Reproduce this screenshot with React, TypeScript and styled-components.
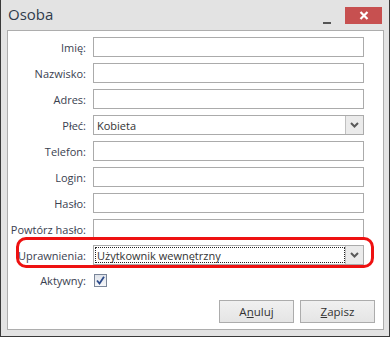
import { FC } from "react";
import styled, { createGlobalStyle } from "styled-components";

const GlobalStyle = createGlobalStyle`
  html, body {
    margin: 0;
    padding: 0;
    background: #ffffff;
  }
  body {
    font-family: "Open Sans", "Noto Sans", sans-serif;
  }
`;

const fields: Array<{ label: string; kind: "text" | "select"; value?: string }> = [
  { label: "Imię:", kind: "text" },
  { label: "Nazwisko:", kind: "text" },
  { label: "Adres:", kind: "text" },
  { label: "Płeć:", kind: "select", value: "Kobieta" },
  { label: "Telefon:", kind: "text" },
  { label: "Login:", kind: "text" },
  { label: "Hasło:", kind: "text" },
  { label: "Powtórz hasło:", kind: "text" },
];

const Chevron: FC = () => (
  <svg width="9" height="6" viewBox="0 0 9 6">
    <path d="M1 1 L4.5 4.5 L8 1" fill="none" stroke="#5a5a5a" strokeWidth="2" />
  </svg>
);

const Select: FC<{ value: string; focused?: boolean }> = ({ value, focused }) => (
  <SelectBox>
    <SelectValue $focused={focused}>{value}</SelectValue>
    <SelectArrow>
      <Chevron />
    </SelectArrow>
  </SelectBox>
);

const App: FC = () => {
  return (
    <>
      <GlobalStyle />
      <Window>
        <TitleBar>
          <Title>Osoba</Title>
          <MinimizeButton>
            <MinimizeGlyph />
          </MinimizeButton>
          <CloseButton>
            <svg width="10" height="9" viewBox="0 0 10 9">
              <path d="M1.5 1 L8.5 8 M8.5 1 L1.5 8" stroke="#ffffff" strokeWidth="2.2" />
            </svg>
          </CloseButton>
        </TitleBar>
        <Panel>
          <Form>
            {fields.map((f) => (
              <Row key={f.label}>
                <Label>{f.label}</Label>
                {f.kind === "text" ? <TextInput /> : <Select value={f.value || ""} />}
              </Row>
            ))}
            <Row $highlight>
              <Label>Uprawnienia:</Label>
              <Select value="Użytkownik wewnętrzny" focused />
            </Row>
            <Row $height={18}>
              <Label>Aktywny:</Label>
              <CheckBox>
                <svg width="9" height="9" viewBox="0 0 9 9">
                  <path d="M1 4.5 L3.5 7.5 L8 0.8" fill="none" stroke="#2b4a8a" strokeWidth="1.8" />
                </svg>
              </CheckBox>
            </Row>
          </Form>
          <Footer>
            <Button>
              A<u>n</u>uluj
            </Button>
            <Button>
              <u>Z</u>apisz
            </Button>
          </Footer>
        </Panel>
      </Window>
    </>
  );
};

export default App;

const Window = styled.div`
  width: 390px;
  height: 337px;
  box-sizing: border-box;
  background: #e3e3e3;
  border: 1px solid #3a3a3a;
  border-top: none;
  display: flex;
  flex-direction: column;
  color: #333333;
`;

const TitleBar = styled.div`
  height: 30px;
  display: flex;
  align-items: flex-start;
  padding: 0 7px 0 7px;
`;

const Title = styled.div`
  font-size: 15px;
  line-height: 30px;
  color: #2f3b4c;
  flex: 1;
  margin-top: -1px;
`;

const MinimizeButton = styled.div`
  width: 18px;
  height: 18px;
  margin-top: 7px;
  margin-right: 9px;
  display: flex;
  align-items: flex-end;
  justify-content: center;
`;

const MinimizeGlyph = styled.div`
  width: 8px;
  height: 2px;
  background: #555555;
  margin-bottom: 1px;
`;

const CloseButton = styled.div`
  width: 37px;
  height: 17px;
  margin-top: 7px;
  background: #c75050;
  display: flex;
  align-items: center;
  justify-content: center;
`;

const Panel = styled.div`
  flex: 1;
  margin: 0 5px 6px 6px;
  background: #ffffff;
  border: 1px solid #adadad;
  display: flex;
  flex-direction: column;
`;

const Form = styled.div`
  display: flex;
  flex-direction: column;
  gap: 6px;
  padding-top: 6px;
`;

const Row = styled.div<{ $highlight?: boolean; $height?: number }>`
  display: flex;
  align-items: center;
  gap: 7px;
  height: ${(p) => p.$height ?? 20}px;
  position: relative;
  ${(p) =>
    p.$highlight &&
    `
    &::after {
      content: "";
      position: absolute;
      left: 8px;
      right: 9px;
      top: -8px;
      bottom: -3px;
      border: 3px solid #ee1111;
      border-radius: 10px;
      pointer-events: none;
    }
  `}
`;

const Label = styled.div`
  width: 78px;
  text-align: right;
  font-size: 11px;
  color: #3a4150;
  white-space: nowrap;
`;

const TextInput = styled.div`
  width: 271px;
  height: 20px;
  box-sizing: border-box;
  border: 1px solid #ababab;
  background: #ffffff;
`;

const SelectBox = styled.div`
  width: 271px;
  height: 20px;
  box-sizing: border-box;
  border: 1px solid #ababab;
  background: #ffffff;
  display: flex;
`;

const SelectValue = styled.div<{ $focused?: boolean }>`
  flex: 1;
  font-size: 11px;
  color: #333333;
  padding-left: 1px;
  margin: 1px 0 1px 1px;
  display: flex;
  align-items: center;
  border: 1px dotted ${(p) => (p.$focused ? "#222222" : "transparent")};
`;

const SelectArrow = styled.div`
  width: 17px;
  background: #ebebeb;
  border-left: 1px solid #c0c0c0;
  display: flex;
  align-items: center;
  justify-content: center;
`;

const CheckBox = styled.div`
  width: 13px;
  height: 13px;
  box-sizing: border-box;
  border: 1px solid #7a8699;
  background: linear-gradient(#dfe3ea, #f6f7f9);
  display: flex;
  align-items: center;
  justify-content: center;
  margin-left: 1px;
`;

const Footer = styled.div`
  margin-top: auto;
  display: flex;
  justify-content: flex-end;
  gap: 6px;
  padding: 0 8px 6px 0;
`;

const Button = styled.div`
  width: 75px;
  height: 23px;
  box-sizing: border-box;
  border: 1px solid #acacac;
  background: linear-gradient(#f0f0f0, #e5e5e5);
  display: flex;
  align-items: center;
  justify-content: center;
  font-size: 11.5px;
  color: #333333;
`;
